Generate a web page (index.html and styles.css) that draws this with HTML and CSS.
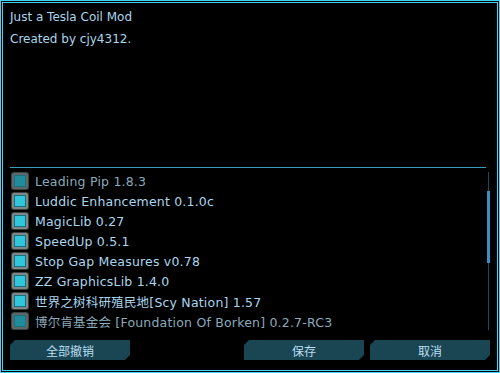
FILE: index.html
```html
<!DOCTYPE html>
<html lang="zh">
<head>
  <meta charset="UTF-8" />
  <title>Mod Manager</title>
  <link rel="stylesheet" href="styles.css">
</head>
<body>
<div class="frame">
  <div class="info">
    <p>Just a Tesla Coil Mod</p>
    <p>Created by cjy4312.</p>
  </div>
  <div class="sep"></div>
  <div class="list-wrap">
    <ul class="mod-list">
      <li class="dim"><span class="check"></span>Leading Pip 1.8.3</li>
      <li><span class="check"></span>Luddic Enhancement 0.1.0c</li>
      <li><span class="check"></span>MagicLib 0.27</li>
      <li><span class="check"></span>SpeedUp 0.5.1</li>
      <li><span class="check"></span>Stop Gap Measures v0.78</li>
      <li><span class="check"></span>ZZ GraphicsLib 1.4.0</li>
      <li><span class="check"></span>世界之树科研殖民地[Scy Nation] 1.57</li>
      <li class="dim"><span class="check"></span>博尔肯基金会 [Foundation Of Borken] 0.2.7-RC3</li>
    </ul>
    <div class="scroll"><div class="thumb"></div></div>
  </div>
  <div class="buttons">
    <button class="btn first">全部撤销</button>
    <button class="btn">保存</button>
    <button class="btn">取消</button>
  </div>
</div>
</body>
</html>
```

FILE: styles.css
```css
html, body {
  margin: 0;
  padding: 0;
  background: #000;
}
body {
  width: 500px;
  height: 373px;
  font-family: "DejaVu Sans", "Noto Sans CJK SC", sans-serif;
  color: #aad6ee;
}
.frame {
  box-sizing: border-box;
  width: 500px;
  height: 373px;
  border: 3px double #3fd4f6;
  padding: 3px 7px 10px 7px;
  display: flex;
  flex-direction: column;
}
.info {
  flex: 1;
}
.info p {
  margin: 0;
  font-size: 12px;
  line-height: 22px;
}
.sep {
  height: 1px;
  background: #3a9cbc;
  margin-right: 4px;
}
.list-wrap {
  display: flex;
  margin-top: 3px;
  height: 160px;
}
.mod-list {
  list-style: none;
  margin: 0;
  padding: 0;
  flex: 1;
}
.mod-list li {
  height: 20px;
  display: flex;
  align-items: center;
  gap: 7px;
  padding-left: 2px;
  font-size: 12.5px;
  letter-spacing: 0.2px;
  white-space: nowrap;
}
.mod-list li.dim {
  color: #8aaabb;
}
.check {
  box-sizing: border-box;
  flex: none;
  width: 16px;
  height: 16px;
  border-radius: 2px;
  border: 2px solid #7c8888;
  background: #30c6dc;
  box-shadow: inset 0 0 0 1px #1a6f80, 0 0 0 1px #3a4444;
}
.dim .check {
  border-color: #5e6868;
  background: #1f8c9c;
}
.scroll {
  width: 3px;
  margin-top: 1px;
  margin-bottom: 1px;
  background: linear-gradient(90deg, transparent 1px, #1c4a66 1px, #1c4a66 2px, transparent 2px);
}
.thumb {
  margin-top: 19px;
  height: 72px;
  background: #3a90c2;
}
.buttons {
  display: flex;
  gap: 6px;
  margin-top: 9px;
}
.btn {
  width: 120px;
  height: 20px;
  border: none;
  padding: 0;
  background: #1a4552;
  color: #bcdff2;
  font-family: "Noto Sans CJK SC", sans-serif;
  font-size: 12px;
  clip-path: polygon(5px 0, 100% 0, 100% calc(100% - 5px), calc(100% - 5px) 100%, 0 100%, 0 5px);
}
.btn.first {
  margin-right: auto;
}
```
